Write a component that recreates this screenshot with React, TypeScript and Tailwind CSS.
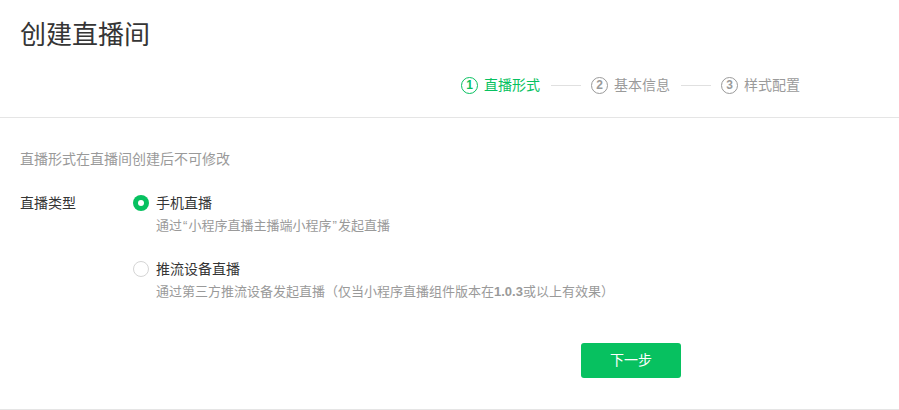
import React from "react";

const FONT = { fontFamily: '"Liberation Sans", "Noto Sans CJK SC", sans-serif' };

function Step({ n, label, active }: { n: number; label: string; active?: boolean }) {
  return (
    <div className="flex items-center">
      <div
        className={
          "flex h-[17px] w-[17px] items-center justify-center rounded-full border-[1.5px] text-[12px] font-bold leading-none " +
          (active ? "border-[#07c160] text-[#07c160]" : "border-[#9a9a9a] text-[#9a9a9a]")
        }
      >
        {n}
      </div>
      <span
        className={
          "ml-[6px] text-[14px] leading-[20px] " + (active ? "text-[#07c160]" : "text-[#9a9a9a]")
        }
      >
        {label}
      </span>
    </div>
  );
}

function Line() {
  return <div className="ml-[11px] mr-[10px] h-px w-[30px] bg-[#e0e0e0]" />;
}

function Radio({ checked }: { checked?: boolean }) {
  return checked ? (
    <div className="flex h-4 w-4 shrink-0 items-center justify-center rounded-full bg-[#07c160]">
      <div className="h-[6px] w-[6px] rounded-full bg-white" />
    </div>
  ) : (
    <div className="h-4 w-4 shrink-0 rounded-full border border-[#d5d5d5] bg-white" />
  );
}

export default function App() {
  return (
    <div className="flex h-[410px] w-full flex-col border-b border-[#e5e5e5] bg-white" style={FONT}>
      <div className="border-b border-[#e5e5e5] pb-[20px]">
        <h1 className="pl-[20px] pt-[17px] text-[26px] font-normal leading-[36px] text-[#353535]">
          创建直播间
        </h1>
        <div className="mt-[20px] flex h-[24px] items-center justify-end pr-[99px]">
          <Step n={1} label="直播形式" active />
          <Line />
          <Step n={2} label="基本信息" />
          <Line />
          <Step n={3} label="样式配置" />
        </div>
      </div>
      <div className="flex-1 pl-[20px] pt-[31px]">
        <p className="text-[14px] leading-[20px] text-[#9a9a9a]">直播形式在直播间创建后不可修改</p>
        <div className="mt-[24px] flex items-start">
          <div className="w-[113px] shrink-0 text-[14px] leading-[20px] text-[#353535]">直播类型</div>
          <div className="flex flex-col">
            <div className="flex items-center">
              <Radio checked />
              <span className="ml-[7px] text-[14px] leading-[20px] text-[#353535]">手机直播</span>
            </div>
            <p className="ml-[23px] mt-[3px] text-[13px] leading-[20px] text-[#9a9a9a]">
              通过<span className="inline-block w-[6.5px] text-center">“</span>小程序直播主播端小程序<span className="inline-block w-[6.5px] text-center">”</span>发起直播
            </p>
            <div className="mt-[23px] flex items-center">
              <Radio />
              <span className="ml-[7px] text-[14px] leading-[20px] text-[#353535]">推流设备直播</span>
            </div>
            <p className="ml-[23px] mt-[3px] text-[13px] leading-[20px] text-[#9a9a9a]">
              通过第三方推流设备发起直播（仅当小程序直播组件版本在<span className="font-bold">1.0.3</span>或以上有效果）
            </p>
          </div>
        </div>
        <button className="ml-[561px] mt-[41px] flex h-[35px] w-[100px] items-center justify-center rounded-[3px] bg-[#07c160] text-[14px] text-white">
          下一步
        </button>
      </div>
    </div>
  );
}
